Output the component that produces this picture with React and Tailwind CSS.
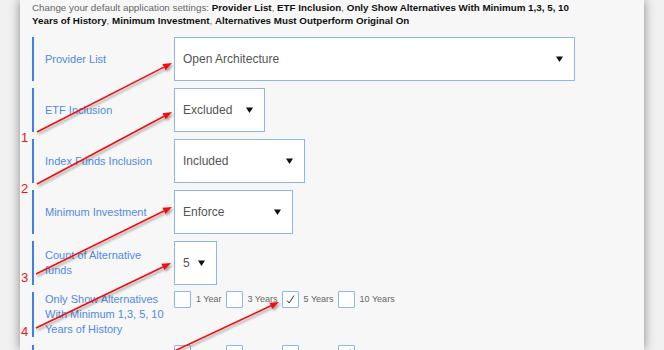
import React from 'react';

const Caret = () => (
  <svg width="7" height="6" viewBox="0 0 7 6" className="shrink-0">
    <path d="M0 0.5 L7 0.5 L3.5 6 Z" fill="#111" />
  </svg>
);

const Select = ({ value, width }) => (
  <div
    className="h-[44px] shrink-0 bg-white border border-[#8fb5ef] flex items-center justify-between pl-[8px] pr-[11px] text-[12px] text-[#555]"
    style={{ width }}
  >
    <span>{value}</span>
    <Caret />
  </div>
);

const Label = ({ children, h = 'h-[44px]' }) => (
  <div className={`w-[142px] shrink-0 ${h} border-l-2 border-[#3f80e6] pl-[11px] pr-[8px] flex items-center text-[11px] leading-[15px] text-[#4f8ae3]`}>
    <span>{children}</span>
  </div>
);

const Check = ({ label, checked }) => (
  <div className="flex items-center gap-[5px] mr-[4px]">
    <div className="w-[17px] h-[17px] bg-white border border-[#8fb5ef] rounded-[1px] flex items-center justify-center">
      {checked && (
        <svg width="11" height="11" viewBox="0 0 11 11">
          <path d="M2 6.5 L4.2 9 L9 1.5" fill="none" stroke="#333" strokeWidth="1" />
        </svg>
      )}
    </div>
    <span className="text-[9px] text-[#666]">{label}</span>
  </div>
);

const Arrow = ({ x1, y1, x2, y2 }) => {
  const a = Math.atan2(y2 - y1, x2 - x1);
  const len = 9;
  const w = 3.5;
  const bx = x2 - len * Math.cos(a);
  const by = y2 - len * Math.sin(a);
  const px = -Math.sin(a) * w;
  const py = Math.cos(a) * w;
  return (
    <g filter="url(#sh)">
      <line x1={x1} y1={y1} x2={bx} y2={by} stroke="#f01010" strokeWidth="1.6" />
      <polygon points={`${x2},${y2} ${bx + px},${by + py} ${bx - px},${by - py}`} fill="#f01010" />
    </g>
  );
};

const App = () => {
  return (
    <div className="relative w-[664px] h-[350px] overflow-hidden bg-[#f1f1f1]" style={{ fontFamily: '"Liberation Sans", Arial, sans-serif' }}>
      <div className="ml-[20px] w-[624px] h-full bg-[#f7f7f7] shadow-[0_0_10px_rgba(0,0,0,0.45)]">
        <p className="pl-[12px] pt-[1px] w-[590px] text-[9.8px] leading-[13px] text-[#666]">
          Change your default application settings: <b className="text-[#111]">Provider List</b>, <b className="text-[#111]">ETF Inclusion</b>, <b className="text-[#111]">Only Show Alternatives With Minimum 1,3, 5, 10</b><br />
          <b className="text-[#111]">Years of History</b>, <b className="text-[#111]">Minimum Investment</b>, <b className="text-[#111]">Alternatives Must Outperform Original On</b>
        </p>

        <div className="mt-[10px] pl-[12px] flex flex-col gap-[7px]">
          <div className="flex">
            <Label>Provider List</Label>
            <Select value="Open Architecture" width={401} />
          </div>
          <div className="flex">
            <Label>ETF Inclusion</Label>
            <Select value="Excluded" width={91} />
          </div>
          <div className="flex">
            <Label>Index Funds Inclusion</Label>
            <Select value="Included" width={131} />
          </div>
          <div className="flex">
            <Label>Minimum Investment</Label>
            <Select value="Enforce" width={119} />
          </div>
          <div className="flex">
            <Label>Count of Alternative funds</Label>
            <Select value="5" width={43} />
          </div>
          <div className="flex items-start">
            <Label h="h-[45px]">Only Show Alternatives With Minimum 1,3, 5, 10 Years of History</Label>
            <div className="flex -mt-[1px]">
              <Check label="1 Year" />
              <Check label="3 Years" />
              <Check label="5 Years" checked />
              <Check label="10 Years" />
            </div>
          </div>
          <div className="flex items-start mt-[1px]">
            <Label h="h-[45px]">Alternatives Must Outperform Original On</Label>
            <div className="flex">
              <Check label="1 Year" />
              <Check label="3 Years" />
              <Check label="5 Years" />
              <Check label="10 Years" checked />
            </div>
          </div>
        </div>
      </div>

      <svg className="absolute inset-0 pointer-events-none" width="664" height="350">
        <defs>
          <filter id="sh" x="-10%" y="-10%" width="130%" height="130%">
            <feDropShadow dx="1.5" dy="2" stdDeviation="1" floodColor="#000" floodOpacity="0.35" />
          </filter>
        </defs>
        <Arrow x1={37} y1={132} x2={172} y2={63} />
        <Arrow x1={37} y1={184} x2={172} y2={112} />
        <Arrow x1={36} y1={274} x2={172} y2={207} />
        <Arrow x1={36} y1={328} x2={171} y2={263} />
        <Arrow x1={168} y1={354} x2={279} y2={302} />
        <g fill="#ee1111" fontSize="13" fontFamily='"Liberation Sans", Arial, sans-serif'>
          <text x="21" y="142">1</text>
          <text x="21" y="193">2</text>
          <text x="21" y="282">3</text>
          <text x="21" y="336">4</text>
        </g>
      </svg>
    </div>
  );
};

export default App;
